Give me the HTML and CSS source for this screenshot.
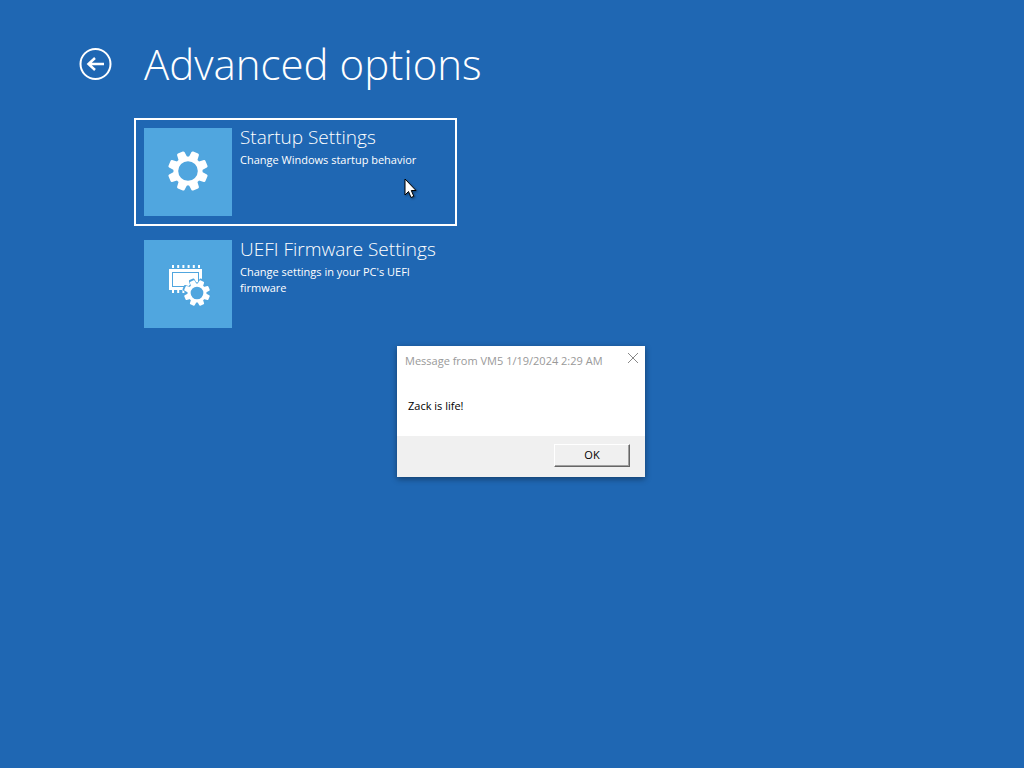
FILE: index.html
```html
<!DOCTYPE html>
<html lang="en">
<head>
    <meta charset="UTF-8">
    <meta name="viewport" content="width=device-width, initial-scale=1.0">
    <title>Advanced options</title>
    <link rel="stylesheet" href="styles.css">
</head>
<body>
    <svg class="defs" width="0" height="0" aria-hidden="true">
        <defs>
            <path id="tooth" d="M-4.600 -13 L-4 -18.8 Q-3.8 -20 -2.6 -20 H2.6 Q3.8 -20 4 -18.8 L4.600 -13 Z"/>
            <g id="gear">
                <circle r="12.2" fill="none" stroke="currentColor" stroke-width="4.800"/>
                <g fill="currentColor">
                    <use href="#tooth" transform="rotate(22.5)"/>
                    <use href="#tooth" transform="rotate(67.5)"/>
                    <use href="#tooth" transform="rotate(112.5)"/>
                    <use href="#tooth" transform="rotate(157.5)"/>
                    <use href="#tooth" transform="rotate(202.5)"/>
                    <use href="#tooth" transform="rotate(247.5)"/>
                    <use href="#tooth" transform="rotate(292.5)"/>
                    <use href="#tooth" transform="rotate(337.5)"/>
                </g>
            </g>
        </defs>
    </svg>

    <header class="header">
        <button class="back" type="button" aria-label="Back">
            <svg width="34" height="34" viewBox="0 0 34 34" fill="none" stroke="#fff">
                <circle cx="17.500" cy="17" r="15" stroke-width="2"/>
                <path d="M26 17H10.500M17 11L10.500 17L17 23" stroke-width="2.5"/>
            </svg>
        </button>
        <h1 class="title">Advanced options</h1>
    </header>

    <main class="options">
        <button class="option selected" type="button">
            <span class="tile">
                <svg width="88" height="88" viewBox="0 0 88 88">
                    <use href="#gear" transform="translate(44 43)"/>
                </svg>
            </span>
            <span class="option-text">
                <span class="option-name">Startup Settings</span>
                <span class="option-info">Change Windows startup behavior</span>
            </span>
        </button>
        <button class="option" type="button">
            <span class="tile">
                <svg width="88" height="88" viewBox="0 0 88 88">
                    <path d="M28 26.500H57" stroke="currentColor" stroke-width="3" stroke-dasharray="2 3.200"/>
                    <path d="M28 51.500H57" stroke="currentColor" stroke-width="3" stroke-dasharray="2 3.200"/>
                    <rect x="25" y="29" width="33" height="21" fill="currentColor"/>
                    <rect x="28.500" y="32.500" width="26" height="14" fill="none" stroke="#50a6df"/>
                    <!-- blue edge that cuts the gear out of the chip -->
                    <use class="cutout" href="#gear" transform="translate(53 53) scale(.74)"/>
                    <circle class="cutout-hole" cx="53" cy="53" r="8"/>
                    <use href="#gear" transform="translate(53 53) scale(.65)"/>
                </svg>
            </span>
            <span class="option-text">
                <span class="option-name">UEFI Firmware Settings</span>
                <span class="option-info">Change settings in your PC's UEFI firmware</span>
            </span>
        </button>
    </main>

    <div class="dialog" role="dialog" aria-labelledby="dialog-title">
        <div class="dialog-bar">
            <span class="dialog-title" id="dialog-title">Message from VM5 1/19/2024 2:29 AM</span>
            <button class="close" type="button" aria-label="Close">
                <svg width="12" height="12" viewBox="0 0 12 12" stroke="#888">
                    <path d="M1 1L11 11M11 1L1 11"/>
                </svg>
            </button>
        </div>
        <p class="message">Zack is life!</p>
        <div class="dialog-footer">
            <button class="ok" type="button">OK</button>
        </div>
    </div>

    <svg class="cursor" width="14" height="22" viewBox="0 0 14 22" aria-hidden="true">
        <path d="M1 1V17L4.500 13.500L7 19.500L9.800 18.300L7.300 12.500H12Z" fill="#fff" stroke="#000"/>
    </svg>
</body>
</html>
```

FILE: styles.css
```css
* {
    box-sizing: border-box;
}
body {
    background-color: #1f67b3;
    color: white;
    margin: 0;
    padding: 32px 78px;
    min-height: 100vh;
    font-family: 'Open Sans', 'Noto Sans', sans-serif;
}
button {
    font-family: inherit;
    color: inherit;
    background: none;
    border: none;
    padding: 0;
    margin: 0;
}
svg {
    display: block;
}
.defs {
    position: absolute;
}
.header {
    display: flex;
    align-items: center;
    gap: 32px;
    height: 64px;
}
.title {
    margin: 0;
    font-size: 42px;
    font-weight: 300;
    line-height: 64px;
}
.options {
    display: flex;
    flex-direction: column;
    align-items: flex-start;
    gap: 4px;
    margin-top: 22px;
    padding-left: 56px;
}
.option {
    display: flex;
    align-items: flex-start;
    gap: 8px;
    width: 323px;
    padding: 8px;
    border: 2px solid transparent;
    text-align: left;
}
.selected {
    border-color: white;
}
.tile {
    flex: none;
    width: 88px;
    height: 88px;
    background-color: #50a6df;
}
.option-name {
    display: block;
    font-size: 19px;
    font-weight: 300;
    line-height: 18px;
    white-space: nowrap;
}
.option-info {
    display: block;
    margin-top: 6px;
    padding-right: 20px;
    font-size: 11px;
    line-height: 16px;
}
.cutout {
    color: #50a6df;
}
.cutout-hole {
    fill: #50a6df;
}
.dialog {
    position: absolute;
    left: 397px;
    top: 346px;
    width: 248px;
    background-color: white;
    color: black;
    box-shadow: 0 2px 6px rgba(0, 0, 0, 0.4);
}
.dialog-bar {
    display: flex;
    justify-content: space-between;
    align-items: flex-start;
    padding: 6px 6px 0 8px;
}
.dialog-title {
    font-size: 11px;
    line-height: 18px;
    color: #999;
    white-space: nowrap;
}
.message {
    margin: 0;
    padding: 28px 11px 22px;
    font-size: 11px;
    line-height: 16px;
}
.dialog-footer {
    display: flex;
    justify-content: flex-end;
    padding: 8px 15px 10px;
    background-color: #f0f0f0;
}
.ok {
    width: 76px;
    height: 23px;
    padding-bottom: 2px;
    font-size: 11px;
    border: 1px solid;
    border-color: white #666 #666 white;
    box-shadow: inset -1px -1px #a0a0a0;
}
.cursor {
    position: absolute;
    left: 404px;
    top: 178px;
    filter: drop-shadow(1px 1px 1px rgba(0, 0, 0, 0.4));
}
```
